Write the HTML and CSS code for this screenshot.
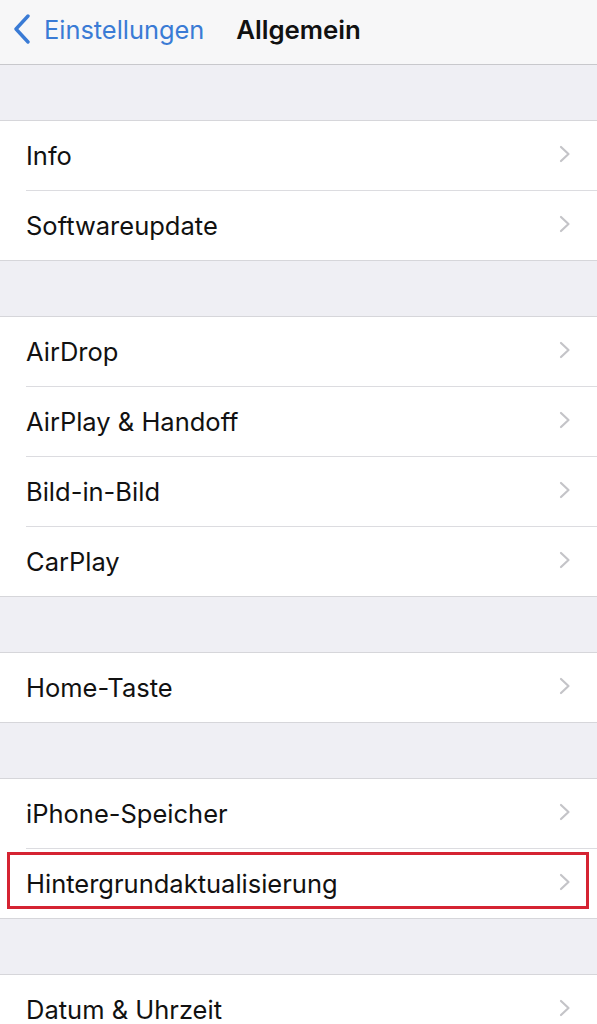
FILE: index.html
```html
<!DOCTYPE html>
<html lang="de">
<head>
<meta charset="utf-8">
<link rel="stylesheet" href="styles.css">
</head>
<body>
<header class="nav">
  <div class="back">
    <svg class="back-icon" viewBox="0 0 18 30" width="18" height="30"><path d="M15 2 L3 15 L15 28" fill="none" stroke="#3a7bd5" stroke-width="3.4" stroke-linecap="round" stroke-linejoin="round"/></svg>
    <span class="back-label">Einstellungen</span>
  </div>
  <div class="title">Allgemein</div>
</header>

<div class="gap"></div>
<section class="group">
  <div class="row"><span>Info</span><svg class="chev" viewBox="0 0 12 18"><path d="M2 2 L9.5 9 L2 16" /></svg></div>
  <div class="row"><span>Softwareupdate</span><svg class="chev" viewBox="0 0 12 18"><path d="M2 2 L9.5 9 L2 16" /></svg></div>
</section>

<div class="gap"></div>
<section class="group">
  <div class="row"><span>AirDrop</span><svg class="chev" viewBox="0 0 12 18"><path d="M2 2 L9.5 9 L2 16" /></svg></div>
  <div class="row"><span>AirPlay &amp; Handoff</span><svg class="chev" viewBox="0 0 12 18"><path d="M2 2 L9.5 9 L2 16" /></svg></div>
  <div class="row"><span>Bild-in-Bild</span><svg class="chev" viewBox="0 0 12 18"><path d="M2 2 L9.5 9 L2 16" /></svg></div>
  <div class="row"><span>CarPlay</span><svg class="chev" viewBox="0 0 12 18"><path d="M2 2 L9.5 9 L2 16" /></svg></div>
</section>

<div class="gap"></div>
<section class="group">
  <div class="row"><span>Home-Taste</span><svg class="chev" viewBox="0 0 12 18"><path d="M2 2 L9.5 9 L2 16" /></svg></div>
</section>

<div class="gap"></div>
<section class="group">
  <div class="row"><span>iPhone-Speicher</span><svg class="chev" viewBox="0 0 12 18"><path d="M2 2 L9.5 9 L2 16" /></svg></div>
  <div class="row highlighted"><span>Hintergrundaktualisierung</span><svg class="chev" viewBox="0 0 12 18"><path d="M2 2 L9.5 9 L2 16" /></svg><div class="mark"></div></div>
</section>

<div class="gap"></div>
<section class="group">
  <div class="row"><span>Datum &amp; Uhrzeit</span><svg class="chev" viewBox="0 0 12 18"><path d="M2 2 L9.5 9 L2 16" /></svg></div>
</section>
</body>
</html>
```

FILE: styles.css
```css
html, body {
  margin: 0;
  padding: 0;
  background: #efeff4;
  font-family: Inter, "Open Sans", "Liberation Sans", sans-serif;
  overflow: hidden;
}

.nav {
  position: relative;
  height: 64px;
  background: #f7f7f8;
  border-bottom: 1px solid #c8c8cc;
  display: flex;
  align-items: center;
  justify-content: center;
}

.back {
  position: absolute;
  left: 13px;
  top: 0;
  height: 64px;
  display: flex;
  align-items: center;
  gap: 13px;
}

.back-icon {
  display: block;
  margin-top: -6px;
}

.back-label {
  color: #3a7bd5;
  font-size: 25.4px;
  margin-top: -6px;
}

.title {
  font-weight: 600;
  font-size: 25.8px;
  color: #111;
  margin-top: -6px;
}

.gap {
  height: 55px;
}

.group {
  background: #fff;
  border-top: 1px solid #d6d6da;
  border-bottom: 1px solid #d6d6da;
}

.row {
  position: relative;
  height: 69px;
  margin-left: 26px;
  padding-right: 26px;
  display: flex;
  align-items: center;
  justify-content: space-between;
  font-size: 25.5px;
  color: #111;
  border-bottom: 1px solid #dcdce0;
}

.row:last-child {
  border-bottom: none;
}

.chev {
  width: 12px;
  height: 18px;
  margin-top: -4px;
  fill: none;
  stroke: #c4c4c8;
  stroke-width: 2.2;
  stroke-linecap: round;
  stroke-linejoin: round;
}

.mark {
  position: absolute;
  left: -19px;
  right: 8px;
  top: 3px;
  bottom: 9px;
  border: 3px solid #d52332;
}
```
